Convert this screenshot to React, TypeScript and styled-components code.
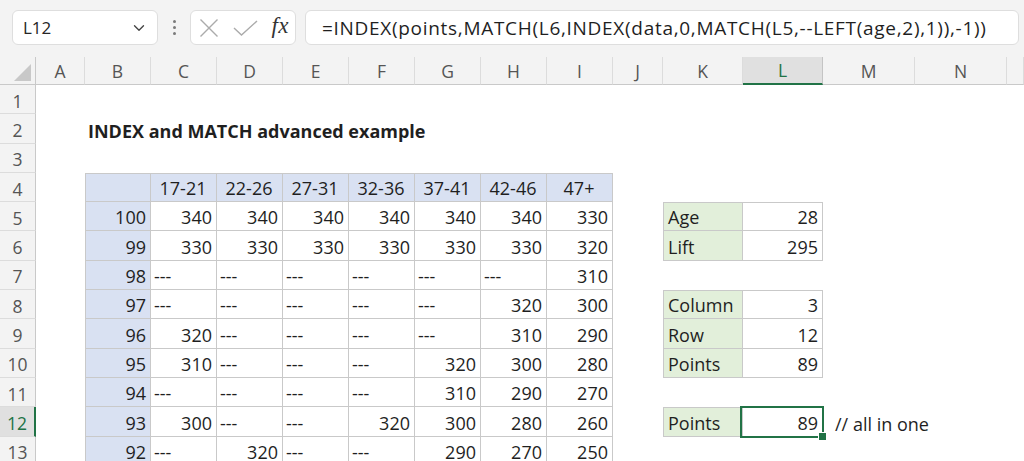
import React from "react";
import styled, { createGlobalStyle, css } from "styled-components";
import { ChevronDown } from "lucide-react";

const GlobalStyle = createGlobalStyle`
  html, body {
    margin: 0;
    padding: 0;
    background: #f3f3f3;
  }
  * {
    box-sizing: border-box;
  }
`;

const GREEN = "#217346";
const LINE = "#c9c9c9";

const Window = styled.div`
  width: 1024px;
  height: 461px;
  overflow: hidden;
  background: #f3f3f3;
  font-family: "Open Sans", "Liberation Sans", sans-serif;
  color: #1f1f1f;
`;

/* ---------- formula bar ---------- */

const FormulaBar = styled.div`
  display: flex;
  align-items: center;
  height: 57px;
  padding: 0 5px 2px 12px;
`;

const Box = styled.div`
  display: flex;
  align-items: center;
  height: 35px;
  background: #fff;
  border: 1px solid #dedede;
  border-radius: 6px;
`;

const NameBox = styled(Box)`
  width: 146px;
  justify-content: space-between;
  padding: 0 9px 0 10px;
  font-size: 17px;
  color: #262626;

  svg {
    color: #444;
  }
`;

const Grip = styled.div`
  display: flex;
  flex-direction: column;
  align-items: center;
  justify-content: center;
  gap: 3px;
  width: 32px;

  span {
    width: 3px;
    height: 3px;
    border-radius: 50%;
    background: #7a7a7a;
  }
`;

const ActionBox = styled(Box)`
  width: 106px;
  padding: 0 6px 0 8px;
  justify-content: space-between;
`;

const Fx = styled.span`
  font-family: "Liberation Serif", "DejaVu Serif", serif;
  font-style: italic;
  font-size: 23px;
  color: #333;
  padding-bottom: 3px;
  letter-spacing: 0.5px;
`;

const FormulaInput = styled(Box)`
  flex: 1;
  margin-left: 9px;
  padding-left: 16px;
  font-size: 19px;
  letter-spacing: 0.7px;
  color: #1f1f1f;
  white-space: nowrap;
  overflow: hidden;
`;

/* ---------- sheet ---------- */

const COLS = ["A", "B", "C", "D", "E", "F", "G", "H", "I", "J", "K", "L", "M", "N", "O"];
const COL_WIDTHS = [49, 66, 66, 66, 66, 66, 66, 66, 66, 50, 80, 80, 92, 92];
const ROW_COUNT = 13;

const Sheet = styled.div`
  display: grid;
  grid-template-columns: 36px ${COL_WIDTHS.map((w) => `${w}px`).join(" ")} 1fr;
  grid-template-rows: 28px repeat(${ROW_COUNT}, 29.3px);
  height: 404px;
  overflow: hidden;
`;

const Corner = styled.div`
  display: flex;
  align-items: flex-end;
  justify-content: flex-end;
  padding: 0 4px 3px 0;
  border-bottom: 1px solid ${LINE};
  border-right: 1px solid ${LINE};
`;

const ColHead = styled.div<{ $selected?: boolean }>`
  display: flex;
  align-items: center;
  justify-content: center;
  font-size: 17.5px;
  color: #555;
  border-right: 1px solid #dcdcdc;
  border-bottom: 1px solid ${LINE};

  ${(p) =>
    p.$selected &&
    css`
      background: #e0e0e0;
      color: ${GREEN};
      border-bottom: 2px solid ${GREEN};
      border-right-color: #c4c4c4;
    `}
`;

const RowHead = styled.div<{ $selected?: boolean }>`
  display: flex;
  align-items: center;
  justify-content: center;
  padding-top: 3px;
  font-size: 17.5px;
  color: #555;
  border-bottom: 1px solid #dcdcdc;
  border-right: 1px solid ${LINE};

  ${(p) =>
    p.$selected &&
    css`
      background: #e0e0e0;
      color: ${GREEN};
      border-right: 2px solid ${GREEN};
    `}
`;

type Fill = "blue" | "green";
type Align = "left" | "right" | "center";

const FILLS: Record<Fill, string> = {
  blue: "#d9e1f2",
  green: "#e2efda",
};

const Cell = styled.div<{
  $fill?: Fill;
  $align?: Align;
  $bold?: boolean;
  $indent?: number;
  $top?: boolean;
  $left?: boolean;
  $boxed?: boolean;
}>`
  position: relative;
  display: flex;
  align-items: flex-end;
  justify-content: ${(p) =>
    p.$align === "right" ? "flex-end" : p.$align === "center" ? "center" : "flex-start"};
  padding: 0 4px 0 ${(p) => p.$indent ?? 3}px;
  line-height: 25px;
  font-size: 18px;
  font-weight: ${(p) => (p.$bold ? 700 : 400)};
  color: #1f1f1f;
  white-space: nowrap;
  background: ${(p) => (p.$fill ? FILLS[p.$fill] : "#fff")};

  ${(p) =>
    p.$boxed &&
    css`
      border-right: 1px solid ${LINE};
      border-bottom: 1px solid ${LINE};
    `}
  ${(p) => p.$top && `border-top: 1px solid ${LINE};`}
  ${(p) => p.$left && `border-left: 1px solid ${LINE};`}
`;

const Selection = styled.div`
  position: absolute;
  top: -2px;
  left: -3px;
  right: -2px;
  bottom: -2px;
  border: 2px solid ${GREEN};
  z-index: 2;
  pointer-events: none;

  &::after {
    content: "";
    position: absolute;
    right: -5px;
    bottom: -5px;
    width: 7px;
    height: 7px;
    background: ${GREEN};
    border: 1px solid #fff;
  }
`;

const CellText = styled.span`
  position: relative;
  z-index: 1;
`;

/* ---------- data ---------- */

type CellData = { v: string; fill?: Fill; align?: Align; bold?: boolean; indent?: number };

const AGES = ["17-21", "22-26", "27-31", "32-36", "37-41", "42-46", "47+"];
const POINTS: [string, string[]][] = [
  ["100", ["340", "340", "340", "340", "340", "340", "330"]],
  ["99", ["330", "330", "330", "330", "330", "330", "320"]],
  ["98", ["---", "---", "---", "---", "---", "---", "310"]],
  ["97", ["---", "---", "---", "---", "---", "320", "300"]],
  ["96", ["320", "---", "---", "---", "---", "310", "290"]],
  ["95", ["310", "---", "---", "---", "320", "300", "280"]],
  ["94", ["---", "---", "---", "---", "310", "290", "270"]],
  ["93", ["300", "---", "---", "320", "300", "280", "260"]],
  ["92", ["---", "320", "---", "---", "290", "270", "250"]],
];

const cells: Record<string, CellData> = {
  B2: { v: "INDEX and MATCH advanced example", bold: true },
  B4: { v: "", fill: "blue" },
};

AGES.forEach((age, i) => {
  cells[`${COLS[i + 2]}4`] = { v: age, fill: "blue", align: "center" };
});

POINTS.forEach(([lift, row], r) => {
  const rowNum = r + 5;
  cells[`B${rowNum}`] = { v: lift, fill: "blue", align: "right" };
  row.forEach((v, c) => {
    cells[`${COLS[c + 2]}${rowNum}`] = { v, align: v === "---" ? "left" : "right" };
  });
});

const SIDE: [number, string, string][] = [
  [5, "Age", "28"],
  [6, "Lift", "295"],
  [8, "Column", "3"],
  [9, "Row", "12"],
  [10, "Points", "89"],
  [12, "Points", "89"],
];

SIDE.forEach(([row, label, value]) => {
  cells[`K${row}`] = { v: label, fill: "green", indent: 4 };
  cells[`L${row}`] = { v: value, align: "right" };
});

cells.M12 = { v: "// all in one", indent: 12 };

const BOXED = new Set<string>();
for (let r = 4; r <= 13; r++) {
  for (let c = 1; c <= 8; c++) BOXED.add(`${COLS[c]}${r}`);
}
SIDE.forEach(([row]) => {
  BOXED.add(`K${row}`);
  BOXED.add(`L${row}`);
});

const SELECTED = "L12";

const isBoxed = (col: number, row: number) =>
  col >= 0 && row >= 1 && BOXED.has(`${COLS[col]}${row}`);

/* ---------- icons ---------- */

const CornerMark = () => (
  <svg width="17" height="17" viewBox="0 0 17 17">
    <path d="M17 0 L17 17 L0 17 Z" fill="#c8c8c8" />
  </svg>
);

const CancelIcon = () => (
  <svg width="20" height="20" viewBox="0 0 20 20" fill="none" stroke="#ababab" strokeWidth="1.4">
    <path d="M1.5 1.5 L18.5 18.5 M18.5 1.5 L1.5 18.5" />
  </svg>
);

const EnterIcon = () => (
  <svg width="25" height="16" viewBox="0 0 25 16" fill="none" stroke="#ababab" strokeWidth="1.4">
    <path d="M1 8 L8.5 15 L24 1" />
  </svg>
);

const App = () => {
  return (
    <Window>
      <GlobalStyle />
      <FormulaBar>
        <NameBox>
          <span>L12</span>
          <ChevronDown size={18} strokeWidth={1.8} />
        </NameBox>
        <Grip>
          <span />
          <span />
          <span />
        </Grip>
        <ActionBox>
          <CancelIcon />
          <EnterIcon />
          <Fx>fx</Fx>
        </ActionBox>
        <FormulaInput>=INDEX(points,MATCH(L6,INDEX(data,0,MATCH(L5,--LEFT(age,2),1)),-1))</FormulaInput>
      </FormulaBar>

      <Sheet>
        <Corner>
          <CornerMark />
        </Corner>
        {COLS.map((col) => (
          <ColHead key={col} $selected={col === "L"}>
            {col === "O" ? "" : col}
          </ColHead>
        ))}

        {Array.from({ length: ROW_COUNT }, (_, i) => i + 1).map((row) => (
          <React.Fragment key={row}>
            <RowHead $selected={row === 12}>{row}</RowHead>
            {COLS.map((col, c) => {
              const ref = `${col}${row}`;
              const data = cells[ref];
              const boxed = isBoxed(c, row);
              return (
                <Cell
                  key={ref}
                  $fill={data?.fill}
                  $align={data?.align}
                  $bold={data?.bold}
                  $indent={data?.indent}
                  $boxed={boxed}
                  $top={boxed && !isBoxed(c, row - 1)}
                  $left={boxed && !isBoxed(c - 1, row)}
                >
                  {data && <CellText>{data.v}</CellText>}
                  {ref === SELECTED && <Selection />}
                </Cell>
              );
            })}
          </React.Fragment>
        ))}
      </Sheet>
    </Window>
  );
};

export default App;
